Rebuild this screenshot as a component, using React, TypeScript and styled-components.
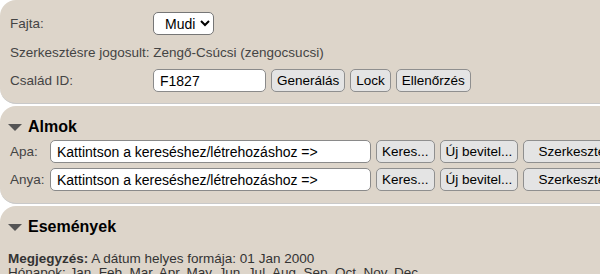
import React from "react";
import styled, { createGlobalStyle } from "styled-components";

const Global = createGlobalStyle`
  html, body { margin: 0; padding: 0; background: #ffffff; }
  body { font-family: "Liberation Sans", Arial, sans-serif; font-size: 13.5px; color: #222; }
`;

const Page = styled.div`
  width: 640px;
  display: flex;
  flex-direction: column;
`;

const Panel = styled.section<{ $first?: boolean }>`
  background: #ddd5ca;
  border-radius: 16px 0 0 16px;
  padding: ${(p) => (p.$first ? "12px 10px 11px 10px" : "10px 10px 12px 8px")};
  border-bottom: 1px solid #c9c9c9;
  margin-bottom: 2px;
`;

const FormGrid = styled.div`
  display: grid;
  grid-template-columns: 143px auto;
  row-gap: 5px;
  align-items: center;
`;

const Label = styled.span<{ $indent?: number }>`
  color: #444;
  font-size: 13.5px;
  padding-left: ${(p) => p.$indent ?? 0}px;
`;

const InfoLine = styled.div`
  grid-column: 1 / span 2;
  color: #444;
  font-size: 13.5px;
  height: 24px;
  line-height: 25px;
`;

const Controls = styled.div`
  display: flex;
  align-items: center;
  gap: 5px;
`;

const Select = styled.select`
  font-family: "Liberation Sans", Arial, sans-serif;
  font-size: 14px;
  height: 23px;
  width: 61px;
  padding: 0 0 0 7px;
  border: 1px solid #767676;
  border-radius: 5px;
  background: #fff;
  color: #000;
`;

const TextInput = styled.input<{ $w: number }>`
  font-family: "Liberation Sans", Arial, sans-serif;
  font-size: 14px;
  height: 23px;
  box-sizing: border-box;
  width: ${(p) => p.$w}px;
  padding: 0 6px;
  border: 1px solid #8a8a8a;
  border-radius: 5px;
  background: #fff;
  color: #000;
`;

const Button = styled.button<{ $w?: number }>`
  font-family: "Liberation Sans", Arial, sans-serif;
  font-size: 13.5px;
  height: 23px;
  box-sizing: border-box;
  padding: 0 5px;
  ${(p) => (p.$w ? `width: ${p.$w}px;` : "")}
  border: 1px solid #8f8f8f;
  border-radius: 5px;
  background: #e4e4e4;
  color: #000;
  white-space: nowrap;
`;

const Heading = styled.h3`
  margin: 0 0 2px 0;
  display: flex;
  align-items: center;
  gap: 6px;
  font-size: 16px;
  font-weight: bold;
  color: #000;
  height: 22px;
`;

const Triangle = styled.span`
  width: 0;
  height: 0;
  border-left: 7px solid transparent;
  border-right: 7px solid transparent;
  border-top: 7px solid #555;
`;

const ParentRows = styled.div`
  display: grid;
  grid-template-columns: 42px auto;
  grid-auto-rows: 23px;
  row-gap: 5px;
  align-items: center;
`;

const Note = styled.div`
  font-size: 13.5px;
  color: #333;
  line-height: 14px;
  margin-top: 14px;
`;

const Strong = styled.b`
  color: #333;
`;

const ParentRow = ({ label }: { label: string }) => (
  <>
    <Label $indent={2}>{label}</Label>
    <Controls>
      <TextInput $w={321} defaultValue="Kattintson a kereséshez/létrehozáshoz =>" />
      <Button>Keres...</Button>
      <Button>Új bevitel...</Button>
      <Button $w={104}>Szerkesztés</Button>
    </Controls>
  </>
);

export default function App() {
  return (
    <>
      <Global />
      <Page>
        <Panel $first>
          <FormGrid>
            <Label>Fajta:</Label>
            <Controls>
              <Select defaultValue="Mudi">
                <option>Mudi</option>
              </Select>
            </Controls>
            <InfoLine>Szerkesztésre jogosult: Zengő-Csúcsi (zengocsucsi)</InfoLine>
            <Label>Család ID:</Label>
            <Controls>
              <TextInput $w={113} defaultValue="F1827" />
              <Button>Generálás</Button>
              <Button>Lock</Button>
              <Button>Ellenőrzés</Button>
            </Controls>
          </FormGrid>
        </Panel>
        <Panel>
          <Heading>
            <Triangle />
            Almok
          </Heading>
          <ParentRows>
            <ParentRow label="Apa:" />
            <ParentRow label="Anya:" />
          </ParentRows>
        </Panel>
        <Panel>
          <Heading>
            <Triangle />
            Események
          </Heading>
          <Note>
            <Strong>Megjegyzés:</Strong> A dátum helyes formája: 01 Jan 2000
            <br />
            Hónapok: Jan, Feb, Mar, Apr, May, Jun, Jul, Aug, Sep, Oct, Nov, Dec
          </Note>
        </Panel>
      </Page>
    </>
  );
}
